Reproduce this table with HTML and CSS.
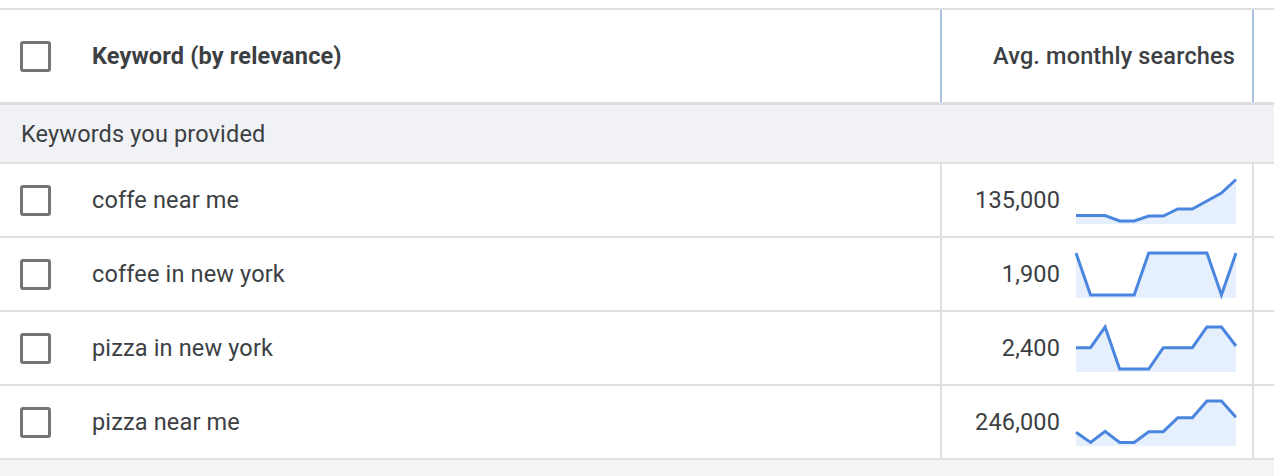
FILE: index.html
```html
<!DOCTYPE html>
<html>
<head>
<meta charset="utf-8">
<link rel="stylesheet" href="styles.css">
</head>
<body>
<div class="page">
  <div class="table">
    <div class="row header">
      <div class="cell kw"><span class="cb"></span><span class="label">Keyword (by relevance)</span></div>
      <div class="cell avg">Avg. monthly searches</div>
      <div class="cell rest"></div>
    </div>
    <div class="group">Keywords you provided</div>
    <div class="row data">
      <div class="cell kw"><span class="cb"></span><span class="label">coffe near me</span></div>
      <div class="cell avg"><span class="num">135,000</span>
        <svg class="spark" viewBox="0 0 160 47" width="160" height="47"><polygon class="area" points="0,38.5 14.55,38.5 29.09,38.5 43.64,44 58.18,44 72.73,39 87.27,39 101.82,32 116.36,32 130.91,24 145.45,16 160,2.5 160,47 0,47"/><polyline class="line" points="0,38.5 14.55,38.5 29.09,38.5 43.64,44 58.18,44 72.73,39 87.27,39 101.82,32 116.36,32 130.91,24 145.45,16 160,2.5"/></svg>
      </div>
      <div class="cell rest"></div>
    </div>
    <div class="row data">
      <div class="cell kw"><span class="cb"></span><span class="label">coffee in new york</span></div>
      <div class="cell avg"><span class="num">1,900</span>
        <svg class="spark" viewBox="0 0 160 47" width="160" height="47"><polygon class="area" points="0,2 14.55,44 29.09,44 43.64,44 58.18,44 72.73,2 87.27,2 101.82,2 116.36,2 130.91,2 145.45,44 160,2 160,47 0,47"/><polyline class="line" points="0,2 14.55,44 29.09,44 43.64,44 58.18,44 72.73,2 87.27,2 101.82,2 116.36,2 130.91,2 145.45,44 160,2"/></svg>
      </div>
      <div class="cell rest"></div>
    </div>
    <div class="row data">
      <div class="cell kw"><span class="cb"></span><span class="label">pizza in new york</span></div>
      <div class="cell avg"><span class="num">2,400</span>
        <svg class="spark" viewBox="0 0 160 47" width="160" height="47"><polygon class="area" points="0,22.7 14.55,22.7 29.09,2 43.64,44 58.18,44 72.73,44 87.27,22.7 101.82,22.7 116.36,22.7 130.91,2 145.45,2 160,21 160,47 0,47"/><polyline class="line" points="0,22.7 14.55,22.7 29.09,2 43.64,44 58.18,44 72.73,44 87.27,22.7 101.82,22.7 116.36,22.7 130.91,2 145.45,2 160,21"/></svg>
      </div>
      <div class="cell rest"></div>
    </div>
    <div class="row data">
      <div class="cell kw"><span class="cb"></span><span class="label">pizza near me</span></div>
      <div class="cell avg"><span class="num">246,000</span>
        <svg class="spark" viewBox="0 0 160 47" width="160" height="47"><polygon class="area" points="0,33.3 14.55,43.5 29.09,32.3 43.64,43.5 58.18,43.5 72.73,32.7 87.27,32.7 101.82,18.7 116.36,18.7 130.91,2 145.45,2 160,18.3 160,47 0,47"/><polyline class="line" points="0,33.3 14.55,43.5 29.09,32.3 43.64,43.5 58.18,43.5 72.73,32.7 87.27,32.7 101.82,18.7 116.36,18.7 130.91,2 145.45,2 160,18.3"/></svg>
      </div>
      <div class="cell rest"></div>
    </div>
  </div>
  <div class="below"></div>
</div>
</body>
</html>
```
FILE: styles.css
```css
html, body {
  margin: 0;
  padding: 0;
  background: #ffffff;
}
.page {
  display: flex;
  flex-direction: column;
  min-height: 100vh;
  padding-top: 8px;
  box-sizing: border-box;
  font-family: Roboto, "Liberation Sans", sans-serif;
  font-size: 23.5px;
  letter-spacing: 0.15px;
  color: #3c4043;
}
.table {
  border-top: 2px solid #e0e0e0;
}
.row {
  display: grid;
  grid-template-columns: 940px 314px 1fr;
}
.cell {
  display: flex;
  align-items: center;
  box-sizing: border-box;
}
.header {
  height: 95px;
  border-bottom: 3px solid #dcdde0;
  box-sizing: border-box;
}
.header .label {
  font-weight: 700;
}
.header .avg {
  justify-content: flex-end;
  padding-right: 17px;
  border-left: 2px solid #a9c0e2;
  border-right: 2px solid #a9c0e2;
  font-weight: 500;
}
.kw {
  padding-left: 20px;
}
.cb {
  width: 31px;
  height: 31px;
  box-sizing: border-box;
  border: 3px solid #757575;
  border-radius: 3px;
  flex: none;
}
.label {
  margin-left: 41px;
}
.group {
  height: 59px;
  box-sizing: border-box;
  border-bottom: 2px solid #e0e0e0;
  background: #f1f2f5;
  padding-left: 21px;
  display: flex;
  align-items: center;
}
.data {
  height: 74px;
  box-sizing: border-box;
  border-bottom: 2px solid #e0e0e0;
}
.data .avg {
  border-left: 2px solid #e0e0e0;
  border-right: 2px solid #e0e0e0;
  justify-content: flex-end;
  padding-right: 16px;
}
.num {
  margin-right: 16px;
}
.spark {
  display: block;
  overflow: visible;
  margin-top: 1px;
}
.spark .area {
  fill: #e6effc;
}
.spark .line {
  fill: none;
  stroke: #4a86df;
  stroke-width: 3;
  stroke-linejoin: miter;
}
.below {
  flex: 1;
  background: #f4f4f4;
}
```
